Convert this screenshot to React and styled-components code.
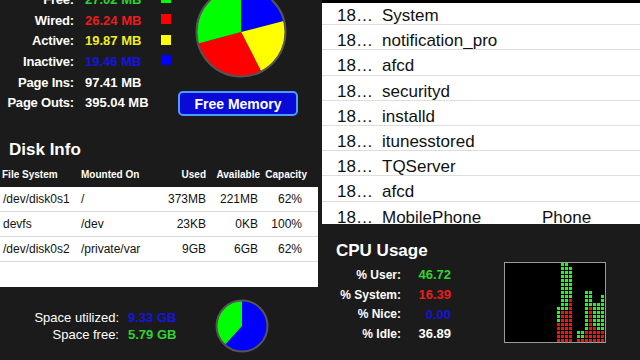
import React from 'react';
import styled, { createGlobalStyle } from 'styled-components';

const GlobalStyle = createGlobalStyle`
  html, body {
    margin: 0;
    padding: 0;
    background: #1b1b1b;
    font-family: "Liberation Sans", Arial, Helvetica, sans-serif;
  }
`;

const Screen = styled.div`
  width: 640px;
  height: 360px;
  display: flex;
  gap: 4px;
  overflow: hidden;
  background: #1b1b1b;
`;

const Panel = styled.div`
  width: 318px;
  height: 360px;
  display: flex;
  flex-direction: column;
  overflow: hidden;
  flex-shrink: 0;
`;

/* ---------- memory ---------- */

const MemorySection = styled.div`
  display: flex;
  margin-top: -15px;
`;

const MemoryList = styled.div`
  display: grid;
  grid-template-columns: 74px 65px 10px;
  grid-auto-rows: 20.7px;
  column-gap: 11px;
  align-items: center;
  padding-top: 4px;
`;

const StatLabel = styled.div`
  text-align: right;
  color: #fff;
  font-weight: bold;
  font-size: 13px;
  letter-spacing: -0.2px;
  white-space: nowrap;
`;

const StatValue = styled.div`
  color: ${p => p.color || '#fff'};
  font-weight: bold;
  font-size: 13px;
  white-space: nowrap;
`;

const Swatch = styled.div`
  width: 10px;
  height: 10px;
  margin-top: -2px;
  background: ${p => p.color};
`;

const PieColumn = styled.div`
  width: 120px;
  margin-left: 7px;
  display: flex;
  flex-direction: column;
  align-items: center;
  gap: 12px;
`;

const PieSvg = styled.svg`
  display: block;
  margin-left: ${p => p.shift || 0}px;
`;

const FreeButton = styled.button`
  width: 120px;
  height: 25px;
  padding: 0;
  border: 2px solid #4b9cff;
  border-radius: 5px;
  background: #0a0ad8;
  color: #fff;
  font-family: inherit;
  font-weight: bold;
  font-size: 14px;
`;

/* ---------- disk ---------- */

const SectionTitle = styled.div`
  color: #fff;
  font-weight: bold;
  font-size: 17px;
  line-height: 22px;
  padding-left: ${p => p.indent}px;
  margin-top: ${p => p.top || 0}px;
`;

const TableRow = styled.div`
  display: flex;
  align-items: center;
  height: ${p => (p.head ? 26 : 25)}px;
  box-sizing: border-box;
  padding-left: ${p => (p.head ? 2 : 3)}px;
  background: ${p => (p.head ? 'transparent' : '#fff')};
  border-bottom: ${p => (p.line ? '1px solid #d9d9d9' : 'none')};
`;

const Cell = styled.div`
  width: ${p => p.w}px;
  flex-shrink: 0;
  text-align: ${p => (p.right ? 'right' : 'left')};
  white-space: nowrap;
  color: ${p => (p.head ? '#fff' : '#111')};
  font-weight: ${p => (p.head ? 'bold' : 'normal')};
  font-size: ${p => (p.head ? 10 : 12)}px;
`;

const TableBody = styled.div`
  background: #fff;
`;

const SpaceSection = styled.div`
  display: flex;
  align-items: flex-start;
`;

const SpaceStats = styled.div`
  display: grid;
  grid-template-columns: 119px 60px;
  grid-auto-rows: 17px;
  column-gap: 9px;
  align-items: center;
  padding-top: 22px;
`;

const SpaceLabel = styled.div`
  text-align: right;
  color: #fff;
  font-size: 13px;
  white-space: nowrap;
`;

const SpacePie = styled.div`
  margin: 12px 0 0 27px;
`;

/* ---------- processes ---------- */

const TopBar = styled.div`
  height: 3px;
  background: #000;
  flex-shrink: 0;
`;

const ProcessList = styled.div`
  height: 221px;
  overflow: hidden;
  background: #fff;
  flex-shrink: 0;
`;

const ProcessInner = styled.div`
  margin-top: -3px;
`;

const ProcessRow = styled.div`
  display: flex;
  height: 25.2px;
  box-sizing: border-box;
  padding: 6px 0 0 15px;
  border-bottom: 1px solid #dedede;
  font-size: 17px;
  line-height: 19px;
  color: #111;
`;

const ProcCol = styled.div`
  width: ${p => p.w}px;
  flex-shrink: 0;
  white-space: nowrap;
  overflow: hidden;
`;

/* ---------- cpu ---------- */

const CpuSection = styled.div`
  flex: 1;
  display: flex;
  align-items: flex-start;
  background: #1b1b1b;
`;

const CpuLeft = styled.div`
  padding-top: 16px;
`;

const CpuStats = styled.div`
  display: grid;
  grid-template-columns: 79px 50px;
  grid-auto-rows: 19.7px;
  align-items: center;
  margin-top: 3px;
`;

const CpuLabel = styled.div`
  text-align: right;
  color: #fff;
  font-weight: bold;
  font-size: 12px;
  white-space: nowrap;
`;

const CpuValue = styled.div`
  text-align: right;
  color: ${p => p.color};
  font-weight: bold;
  font-size: 13px;
`;

const Chart = styled.div`
  width: 100px;
  height: 79px;
  margin: 38px 0 0 53px;
  border: 1px solid #9a9a9a;
  background: #000;
  display: flex;
  align-items: flex-end;
  overflow: hidden;
`;

const ChartCol = styled.div`
  width: 3px;
  margin-right: 1px;
  flex-shrink: 0;
  display: flex;
  flex-direction: column;
  gap: 1px;
`;

const ChartCell = styled.div`
  width: 3px;
  height: 3px;
  background: ${p => (p.red ? '#ee1414' : '#2af02a')};
`;

/* ---------- data ---------- */

const memory = [
  { label: 'Free:', value: '27.02 MB', amount: 27.02, text: '#2fd42f', fill: '#00ff00' },
  { label: 'Wired:', value: '26.24 MB', amount: 26.24, text: '#ec1c1c', fill: '#ff0000' },
  { label: 'Active:', value: '19.87 MB', amount: 19.87, text: '#eeee22', fill: '#ffff00' },
  { label: 'Inactive:', value: '19.46 MB', amount: 19.46, text: '#1515e0', fill: '#0000ff' },
  { label: 'Page Ins:', value: '97.41 MB' },
  { label: 'Page Outs:', value: '395.04 MB' },
];

const disks = [
  ['/dev/disk0s1', '/', '373MB', '221MB', '62%'],
  ['devfs', '/dev', '23KB', '0KB', '100%'],
  ['/dev/disk0s2', '/private/var', '9GB', '6GB', '62%'],
];

const processes = [
  ['System', ''],
  ['notification_pro', ''],
  ['afcd', ''],
  ['securityd', ''],
  ['installd', ''],
  ['itunesstored', ''],
  ['TQServer', ''],
  ['afcd', ''],
  ['MobilePhone', 'Phone'],
];

const cpu = [
  { label: '% User:', value: '46.72', color: '#2fd42f' },
  { label: '% System:', value: '16.39', color: '#ec1c1c' },
  { label: '% Nice:', value: '0.00', color: '#1515d8' },
  { label: '% Idle:', value: '36.89', color: '#fff' },
];

// [total cells, red cells] per chart column, oldest first
const history = [
  [0, 0], [0, 0], [0, 0], [0, 0], [0, 0], [0, 0], [0, 0], [0, 0], [0, 0], [0, 0],
  [0, 0], [0, 0], [0, 0], [9, 5], [20, 8], [20, 8], [19, 11], [0, 0], [3, 1],
  [3, 1], [13, 3], [13, 9], [10, 4], [10, 3], [12, 3],
];

function slice(cx, cy, r, a0, a1) {
  const pt = a => {
    const rad = (a * Math.PI) / 180;
    return `${(cx + r * Math.sin(rad)).toFixed(2)} ${(cy - r * Math.cos(rad)).toFixed(2)}`;
  };
  const large = a1 - a0 > 180 ? 1 : 0;
  return `M${cx} ${cy} L${pt(a0)} A${r} ${r} 0 ${large} 1 ${pt(a1)} Z`;
}

function Pie({ size, radius, parts, shift }) {
  const c = size / 2;
  const total = parts.reduce((s, p) => s + p.amount, 0);
  let angle = 0;
  return (
    <PieSvg width={size} height={size} shift={shift}>
      {parts.map((p, i) => {
        const a0 = angle;
        angle += (p.amount / total) * 360;
        return <path key={i} d={slice(c, c, radius, a0, angle)} fill={p.fill} />;
      })}
      <circle cx={c} cy={c} r={radius + 0.5} fill="none" stroke="#555" strokeWidth="2" />
    </PieSvg>
  );
}

export default function App() {
  const memPie = [memory[3], memory[2], memory[1], memory[0]];
  const diskPie = [
    { amount: 9.33, fill: '#0000ff' },
    { amount: 5.79, fill: '#00ff00' },
  ];

  return (
    <>
      <GlobalStyle />
      <Screen>
        <Panel>
          <MemorySection>
            <MemoryList>
              {memory.map(m => (
                <React.Fragment key={m.label}>
                  <StatLabel>{m.label}</StatLabel>
                  <StatValue color={m.text}>{m.value}</StatValue>
                  {m.fill ? <Swatch color={m.fill} /> : <span />}
                </React.Fragment>
              ))}
            </MemoryList>
            <PieColumn>
              <Pie size={94} radius={44} parts={memPie} shift={6} />
              <FreeButton>Free Memory</FreeButton>
            </PieColumn>
          </MemorySection>

          <SectionTitle indent={9} top={23}>Disk Info</SectionTitle>
          <TableRow head>
            <Cell head w={79}>File System</Cell>
            <Cell head w={70}>Mounted On</Cell>
            <Cell head right w={55}>Used</Cell>
            <Cell head right w={54}>Available</Cell>
            <Cell head right w={47}>Capacity</Cell>
          </TableRow>
          <TableBody>
            {disks.map(d => (
              <TableRow key={d[0]} line>
                <Cell w={78}>{d[0]}</Cell>
                <Cell w={70}>{d[1]}</Cell>
                <Cell right w={55}>{d[2]}</Cell>
                <Cell right w={52}>{d[3]}</Cell>
                <Cell right w={44}>{d[4]}</Cell>
              </TableRow>
            ))}
            <TableRow />
          </TableBody>

          <SpaceSection>
            <SpaceStats>
              <SpaceLabel>Space utilized:</SpaceLabel>
              <StatValue color="#1515e0">9.33 GB</StatValue>
              <SpaceLabel>Space free:</SpaceLabel>
              <StatValue color="#2fd42f">5.79 GB</StatValue>
            </SpaceStats>
            <SpacePie>
              <Pie size={54} radius={25} parts={diskPie} />
            </SpacePie>
          </SpaceSection>
        </Panel>

        <Panel>
          <TopBar />
          <ProcessList>
            <ProcessInner>
              {processes.map((p, i) => (
                <ProcessRow key={i}>
                  <ProcCol w={45}>18…</ProcCol>
                  <ProcCol w={160}>{p[0]}</ProcCol>
                  <ProcCol w={90}>{p[1]}</ProcCol>
                </ProcessRow>
              ))}
            </ProcessInner>
          </ProcessList>

          <CpuSection>
            <CpuLeft>
              <SectionTitle indent={14}>CPU Usage</SectionTitle>
              <CpuStats>
                {cpu.map(c => (
                  <React.Fragment key={c.label}>
                    <CpuLabel>{c.label}</CpuLabel>
                    <CpuValue color={c.color}>{c.value}</CpuValue>
                  </React.Fragment>
                ))}
              </CpuStats>
            </CpuLeft>
            <Chart>
              {history.map(([total, red], i) => (
                <ChartCol key={i}>
                  {Array.from({ length: total }, (_, k) => (
                    <ChartCell key={k} red={k >= total - red} />
                  ))}
                </ChartCol>
              ))}
            </Chart>
          </CpuSection>
        </Panel>
      </Screen>
    </>
  );
}
